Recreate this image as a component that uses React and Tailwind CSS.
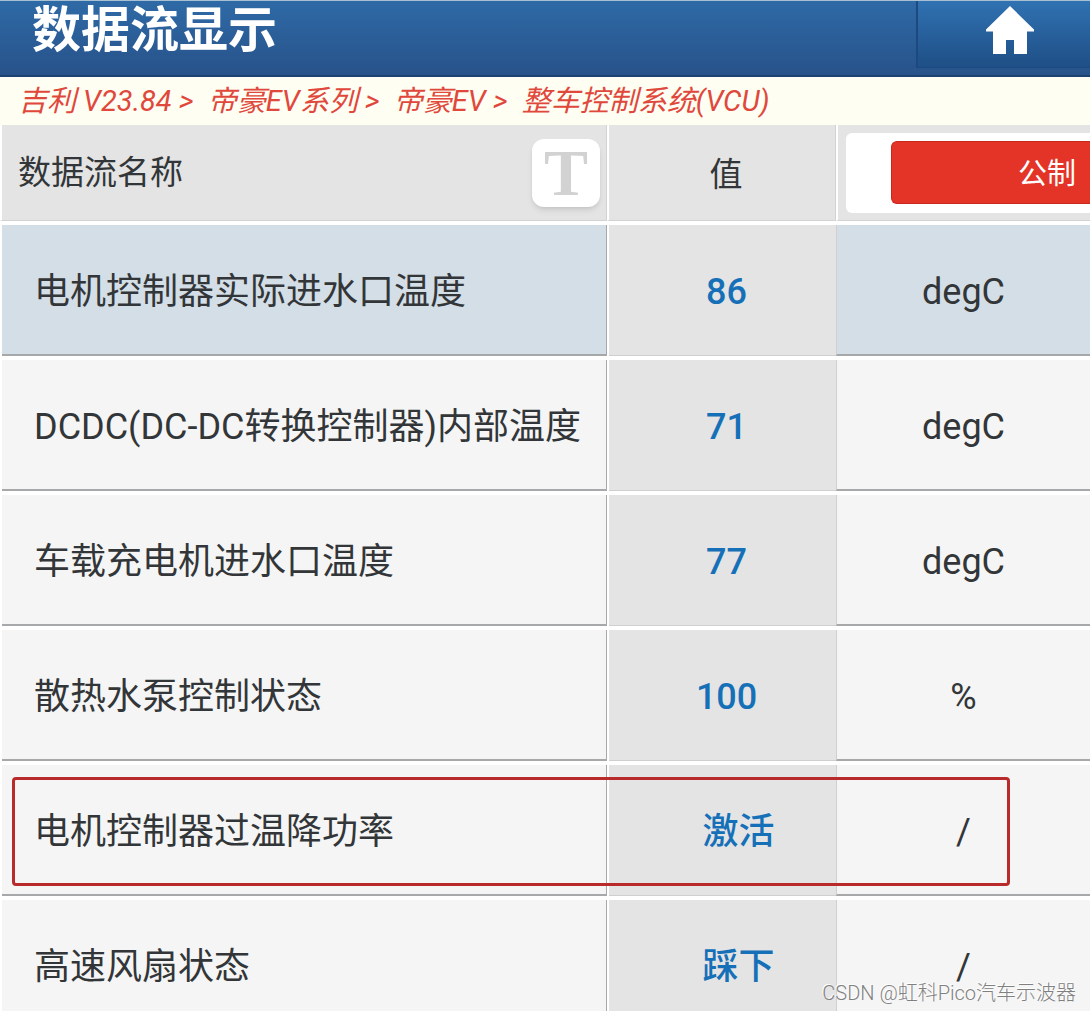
const rows = [
  { name: '电机控制器实际进水口温度', value: '86', unit: 'degC', selected: true },
  { name: 'DCDC(DC-DC转换控制器)内部温度', value: '71', unit: 'degC' },
  { name: '车载充电机进水口温度', value: '77', unit: 'degC' },
  { name: '散热水泵控制状态', value: '100', unit: '%' },
  { name: '电机控制器过温降功率', value: '激活', unit: '/', state: true, marked: true },
  { name: '高速风扇状态', value: '踩下', unit: '/', state: true },
];

function HomeIcon() {
  return (
    <svg viewBox="0 0 48 50" className="h-[50px] w-12" fill="#fff" aria-hidden="true">
      <path d="M24 1 L48 24.5 V26.5 H41 V49 H28 V35 H20 V49 H7 V26.5 H0 V24.5 Z" />
    </svg>
  );
}

function TitleBar() {
  return (
    <header className="flex h-[77px] justify-between border-t border-b-2 border-t-[#a9bfd2] border-b-[#1c4272] bg-linear-to-b from-[#2e6aa6] to-[#28528a]">
      <h1 className="pl-8 text-[49px] leading-[60px] font-bold text-white">数据流显示</h1>
      <button
        type="button"
        aria-label="主页"
        className="flex h-[67px] w-[16%] items-start justify-center border-b border-l-2 border-[#1c4a80] bg-linear-to-b from-[#3072b2] to-[#1f4f86] pt-1 pl-3"
      >
        <HomeIcon />
      </button>
    </header>
  );
}

function Breadcrumb() {
  return (
    <nav className="h-12 bg-[#fffef3] pl-[18px] text-[29px] leading-[48px] whitespace-pre text-[#e0483c] italic">
      吉利 V23.84 &gt;{'  '}帝豪EV系列 &gt;{'  '}帝豪EV &gt;{'  '}整车控制系统(VCU)
    </nav>
  );
}

function HeaderRow() {
  return (
    <tr className="h-24 bg-[#e4e4e4] text-[#333638]">
      <th scope="col" className="border-r border-b border-l-2 border-[#d2d2d2] border-l-white p-0 font-normal">
        <div className="flex items-center justify-between pr-1.5 pl-4">
          <span className="text-[33px]">数据流名称</span>
          <button
            type="button"
            aria-label="T 文字"
            className="flex size-[68px] items-center justify-center rounded-xl bg-white font-['Liberation_Serif',serif] text-[66px] leading-none font-bold text-[#d2d2d2] shadow-md"
          >
            T
          </button>
        </div>
      </th>
      <th scope="col" className="border-r border-b border-l-2 border-[#d2d2d2] border-l-white p-0 pt-1 pl-2 text-[33px] font-normal">
        值
      </th>
      <th scope="col" className="overflow-hidden border-b border-l-2 border-[#d2d2d2] border-l-white p-0 pl-2 font-normal">
        <div className="flex h-20 items-center rounded-l-md bg-white pl-[45px]">
          <button
            type="button"
            className="h-[63px] w-full rounded-l-md border border-r-0 border-[#c9281b] bg-[#e33427] pt-1 pr-3.5 text-right text-[29px] text-white"
          >
            公制
          </button>
        </div>
      </th>
    </tr>
  );
}

function DataRow({ row }) {
  const tone = row.selected ? 'bg-[#d3dee7]' : 'bg-[#f5f5f5]';
  const valueStyle = row.state ? 'pl-8' : 'pl-2';
  return (
    <tr className="relative h-[135px] text-4xl text-[#333638]">
      <td className="border-t-4 border-l-2 border-white p-0">
        <div className={`flex h-[131px] items-center border-r border-b-2 border-[#a6a8aa] pt-1 pl-8 whitespace-nowrap ${tone}`}>
          {row.name}
        </div>
      </td>
      <td className="border-t-4 border-l-2 border-white p-0">
        <div className={`flex h-[131px] items-center justify-center border-b border-[#cfcfcf] bg-[#e4e4e4] pt-1 font-medium text-[#1670b8] ${valueStyle}`}>
          {row.value}
        </div>
      </td>
      <td className="border-t-4 border-white p-0">
        <div className={`flex h-[131px] items-center justify-center border-b-2 border-l border-[#a6a8aa] border-l-[#d0d0d0] pt-1 ${tone}`}>
          {row.unit}
        </div>
        {row.marked && (
          <span className="pointer-events-none absolute top-4 right-20 bottom-2.5 left-3 rounded-sm border-3 border-[#b92a2b]" />
        )}
      </td>
    </tr>
  );
}

export default function App() {
  return (
    <main className="relative max-h-screen overflow-hidden bg-white font-[Roboto,'Noto_Sans_CJK_SC',sans-serif]">
      <TitleBar />
      <Breadcrumb />
      <table className="w-full table-fixed border-separate border-spacing-0">
        <colgroup>
          <col className="w-[55.7%]" />
          <col className="w-[21%]" />
          <col />
        </colgroup>
        <thead>
          <HeaderRow />
        </thead>
        <tbody>
          {rows.map((row) => (
            <DataRow key={row.name} row={row} />
          ))}
        </tbody>
      </table>
      <p className="absolute right-3.5 bottom-1 text-xl leading-7 font-light text-[#808080] text-shadow-[-1px_-1px_0_#fff]">
        CSDN @虹科Pico汽车示波器
      </p>
    </main>
  );
}
